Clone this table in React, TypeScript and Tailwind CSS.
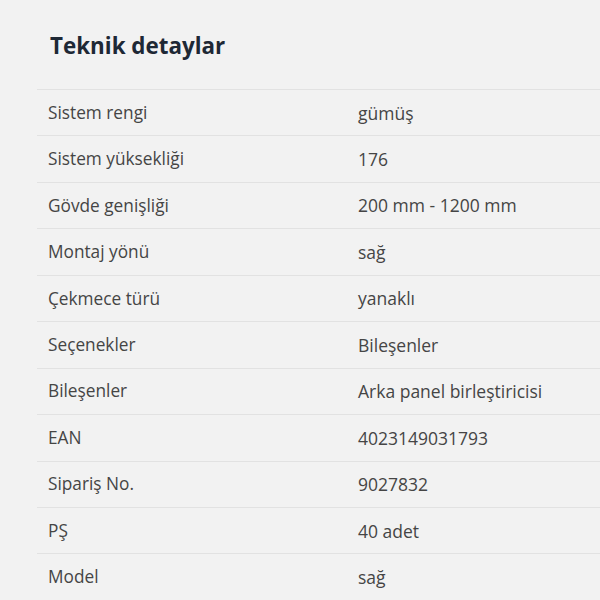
import React from "react";

const rows: [string, string][] = [
  ["Sistem rengi", "gümüş"],
  ["Sistem yüksekliği", "176"],
  ["Gövde genişliği", "200 mm - 1200 mm"],
  ["Montaj yönü", "sağ"],
  ["Çekmece türü", "yanaklı"],
  ["Seçenekler", "Bileşenler"],
  ["Bileşenler", "Arka panel birleştiricisi"],
  ["EAN", "4023149031793"],
  ["Sipariş No.", "9027832"],
  ["PŞ", "40 adet"],
  ["Model", "sağ"],
];

export default function App() {
  return (
    <div className="w-[600px] h-[600px] overflow-hidden bg-[#f2f2f2] font-['Open_Sans',sans-serif]">
      <h2 className="pl-[50px] pt-[31px] h-[89px] text-[22.4px] font-bold text-[#1e2835] leading-[30px]">
        Teknik detaylar
      </h2>
      <div className="ml-[37px]">
        {rows.map(([k, v]) => (
          <div
            key={k}
            className="flex items-center h-[46.44px] border-t border-[#e2e2e2] text-[#454545]"
          >
            <div className="w-[321px] pl-[11px] text-[17.25px]">{k}</div>
            <div className="text-[17.5px]">{v}</div>
          </div>
        ))}
      </div>
    </div>
  );
}
